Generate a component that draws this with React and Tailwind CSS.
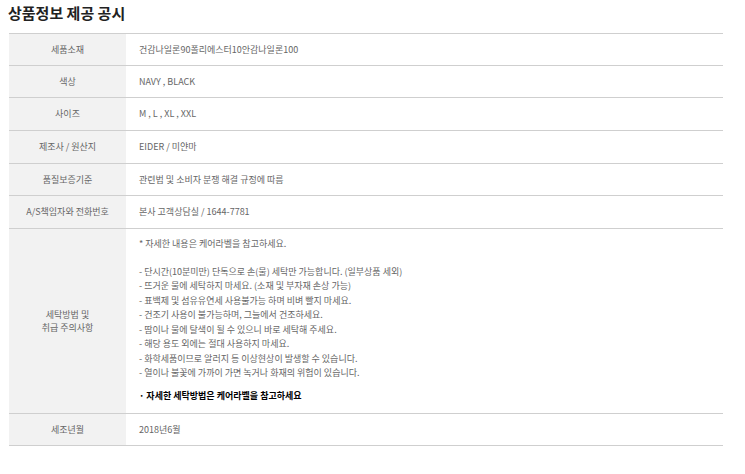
import React from "react";

const rows = [
  { label: "세품소재", value: "건감나일론90폴리에스터10안감나일론100", h: "h-[32px]" },
  { label: "색상", value: "NAVY , BLACK", h: "h-[32px]" },
  { label: "사이즈", value: "M , L , XL , XXL", h: "h-[33px]" },
  { label: "제조사 / 원산지", value: "EIDER / 미얀마", h: "h-[33px]" },
  { label: "품질보증기준", value: "관련법 및 소비자 분쟁 해결 규정에 따름", h: "h-[32px]" },
  { label: "A/S책임자와 전화번호", value: "본사 고객상담실 / 1644-7781", h: "h-[33px]" },
];

const care = [
  "- 단시간(10분미만) 단독으로 손(물) 세탁만 가능합니다. (일부상품 세외)",
  "- 뜨거운 물에 세탁하지 마세요. (소재 및 부자재 손상 가능)",
  "- 표백제 및 섬유유연세 사용불가능 하며 비벼 빨지 마세요.",
  "- 건조기 사용이 불가능하며, 그늘에서 건조하세요.",
  "- 땀이나 물에 탈색이 될 수 있으니 바로 세탁해 주세요.",
  "- 해당 용도 외에는 절대 사용하지 마세요.",
  "- 화학세품이므로 알러지 등 이상현상이 발생할 수 있습니다.",
  "- 열이나 불꽃에 가까이 가면 녹거나 화재의 위험이 있습니다.",
];

const Row = ({ label, h, children }) => (
  <div className={`flex border-b border-[#cfcfcf] ${h}`}>
    <div className="w-[117px] shrink-0 bg-[#f2f2f2] flex items-center justify-center text-center text-[#666]">
      {label}
    </div>
    <div className="flex-1 flex items-center pl-[13px] text-[#666]">{children}</div>
  </div>
);

const App = () => {
  return (
    <div
      className="w-[745px] h-[474px] bg-white pl-[9px] pr-[22px] text-[9px]"
      style={{ fontFamily: '"Noto Sans CJK KR", "Noto Sans", sans-serif' }}
    >
      <h2 className="pt-[3px] -ml-[1px] h-[33px] text-[15px] font-bold leading-[20px] text-[#222]">
        상품정보 제공 공시
      </h2>
      <div className="border-t border-[#cfcfcf]">
        {rows.map((r, i) => (
          <Row key={i} label={r.label} h={r.h}>
            {r.value}
          </Row>
        ))}
        <div className="flex border-b border-[#cfcfcf] h-[185px]">
          <div className="w-[117px] shrink-0 bg-[#f2f2f2] flex items-center justify-center text-center text-[#666] leading-[13px]">
            세탁방법 및
            <br />
            취급 주의사항
          </div>
          <div className="flex-1 pl-[13px] pt-[8px] text-[#666] leading-[14.5px]">
            <p>* 자세한 내용은 케어라벨을 참고하세요.</p>
            <div className="mt-[13px]">
              {care.map((c, i) => (
                <p key={i}>{c}</p>
              ))}
            </div>
            <p className="mt-[8px] font-bold text-black">· 자세한 세탁방법은 케어라벨을 참고하세요</p>
          </div>
        </div>
        <Row label="세조년월" h="h-[32px]">
          2018년6월
        </Row>
      </div>
    </div>
  );
};

export default App;
